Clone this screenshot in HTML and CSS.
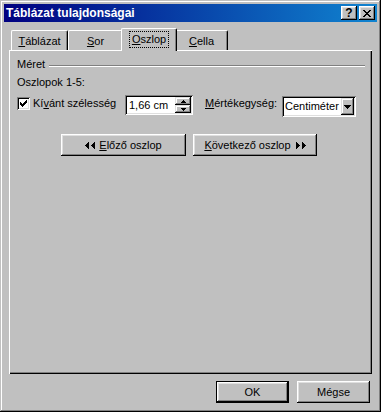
FILE: index.html
```html
<!DOCTYPE html>
<html>
<head>
<meta charset="utf-8">
<title>Táblázat tulajdonságai</title>
<link rel="stylesheet" href="styles.css">
</head>
<body>
<div class="window">
  <div class="titlebar">
    <span class="title">Táblázat tulajdonságai</span>
    <div class="tbtns">
      <span class="tbtn help">?</span>
      <span class="tbtn close"><svg width="8" height="7" viewBox="0 0 8 7"><path d="M0 0h2v1H0zM6 0h2v1H6zM1 1h2v1H1zM5 1h2v1H5zM2 2h4v1H2zM3 3h2v1H3zM2 4h4v1H2zM1 5h2v1H1zM5 5h2v1H5zM0 6h2v1H0zM6 6h2v1H6z"/></svg></span>
    </div>
  </div>
  <div class="client">
    <div class="tabs">
      <div class="tab t1"><u>T</u>áblázat</div>
      <div class="tab t2"><u>S</u>or</div>
      <div class="tab t3 sel"><span class="focus"><u>O</u>szlop</span></div>
      <div class="tab t4"><u>C</u>ella</div>
    </div>
    <div class="panel">
      <div class="group"><span>Méret</span><div class="sep"></div></div>
      <div class="sub">Oszlopok 1-5:</div>
      <div class="row">
        <div class="check">
          <span class="box"><svg width="13" height="13" viewBox="0 0 13 13"><path d="M3 5h1v3H3zM4 6h1v3H4zM5 7h1v3H5zM6 6h1v3H6zM7 5h1v3H7zM8 4h1v3H8zM9 3h1v3H9z"/></svg></span>
          <span>Kí<u>v</u>ánt szélesség</span>
        </div>
        <div class="spin field">
          <span class="val">1,66 cm</span>
          <div class="arrows">
            <span class="sbtn"><svg width="5" height="3" viewBox="0 0 5 3"><path d="M2 0h1v1H2zM1 1h3v1H1zM0 2h5v1H0z"/></svg></span>
            <span class="sbtn"><svg width="5" height="3" viewBox="0 0 5 3"><path d="M0 0h5v1H0zM1 1h3v1H1zM2 2h1v1H2z"/></svg></span>
          </div>
        </div>
        <span class="lbl"><u>M</u>értékegység:</span>
        <div class="combo field">
          <span class="val">Centiméter</span>
          <span class="dbtn"><svg width="7" height="4" viewBox="0 0 7 4"><path d="M0 0h7v1H0zM1 1h5v1H1zM2 2h3v1H2zM3 3h1v1H3z"/></svg></span>
        </div>
      </div>
      <div class="nav">
        <div class="btn prev"><svg width="10" height="7" viewBox="0 0 10 7"><path d="M3 0h1v1H3zM2 1h2v1H2zM1 2h3v1H1zM0 3h4v1H0zM1 4h3v1H1zM2 5h2v1H2zM3 6h1v1H3zM9 0h1v1H9zM8 1h2v1H8zM7 2h3v1H7zM6 3h4v1H6zM7 4h3v1H7zM8 5h2v1H8zM9 6h1v1H9z"/></svg><span><u>E</u>lőző oszlop</span></div>
        <div class="btn next"><span><u>K</u>övetkező oszlop</span><svg width="10" height="7" viewBox="0 0 10 7"><path d="M0 0h1v1H0zM0 1h2v1H0zM0 2h3v1H0zM0 3h4v1H0zM0 4h3v1H0zM0 5h2v1H0zM0 6h1v1H0zM6 0h1v1H6zM6 1h2v1H6zM6 2h3v1H6zM6 3h4v1H6zM6 4h3v1H6zM6 5h2v1H6zM6 6h1v1H6z"/></svg></div>
      </div>
    </div>
    <div class="footer">
      <div class="btn fbtn default">OK</div>
      <div class="btn fbtn">Mégse</div>
    </div>
  </div>
</div>
</body>
</html>
```

FILE: styles.css
```css
html, body {
  margin: 0;
  padding: 0;
  background: #c0c0c0;
}
body {
  font-family: "Liberation Sans", Arial, sans-serif;
  font-size: 11px;
  color: #000;
}
u { text-decoration: underline; text-underline-offset: 1px; }
svg { display: block; shape-rendering: crispEdges; fill: #000; }

.window {
  width: 381px;
  height: 412px;
  box-sizing: border-box;
  padding: 4px;
  background: #c0c0c0;
  box-shadow: inset -1px -1px #000, inset 1px 1px #c0c0c0, inset -2px -2px #808080, inset 2px 2px #fff;
  display: flex;
  flex-direction: column;
}

.titlebar {
  height: 18px;
  flex: none;
  background: linear-gradient(to right, #000080, #1084d0);
  display: flex;
  align-items: center;
  justify-content: space-between;
  padding: 0 2px;
}
.title {
  color: #fff;
  font-weight: bold;
  font-size: 12px;
  line-height: 14px;
}
.tbtns { display: flex; gap: 2px; }
.tbtn {
  width: 16px;
  height: 14px;
  box-sizing: border-box;
  background: #c0c0c0;
  box-shadow: inset -1px -1px #000, inset 1px 1px #fff, inset -2px -2px #808080, inset 2px 2px #dfdfdf;
  display: flex;
  align-items: center;
  justify-content: center;
}
.help { font-weight: bold; font-size: 12px; line-height: 12px; padding-bottom: 1px; }

.client {
  flex: 1;
  padding: 6px 5px 5px;
  display: flex;
  flex-direction: column;
}

.tabs {
  display: flex;
  align-items: flex-end;
  height: 22px;
  padding-left: 2px;
  flex: none;
}
.tab {
  height: 20px;
  box-sizing: border-box;
  background: #c0c0c0;
  border-top: 1px solid #fff;
  border-left: 1px solid #fff;
  border-right: 1px solid #000;
  border-radius: 2px 2px 0 0;
  box-shadow: inset -1px 0 #808080;
  text-align: center;
  line-height: 13px;
  padding-top: 4px;
}
.t1 { width: 57px; }
.t2 { width: 55px; }
.t3 { width: 56px; }
.t4 { width: 53px; }
.tab.sel {
  height: 23px;
  margin: 0 -2px -1px;
  padding-top: 2px;
  z-index: 1;
}
.focus {
  display: inline-block;
  border: 1px dotted #000;
  padding: 1px 2px;
  line-height: 13px;
}

.panel {
  height: 324px;
  flex: none;
  box-sizing: border-box;
  padding: 8px 7px 0 8px;
  box-shadow: inset 1px 1px #fff, inset -1px -1px #000, inset -2px -2px #808080;
}
.group {
  display: flex;
  height: 13px;
  line-height: 13px;
}
.sep {
  flex: 1;
  margin: 7px 0 0 4px;
  height: 0;
  border-top: 1px solid #808080;
  border-bottom: 1px solid #fff;
}
.sub {
  margin-top: 5px;
  line-height: 13px;
}

.row {
  margin-top: 6px;
  height: 22px;
  display: flex;
  align-items: flex-start;
}
.check {
  width: 108px;
  margin-top: 2px;
  display: flex;
  line-height: 13px;
}
.box {
  width: 13px;
  height: 13px;
  margin-right: 3px;
  background: #fff;
  box-shadow: inset 1px 1px #808080, inset -1px -1px #fff, inset 2px 2px #000, inset -2px -2px #dfdfdf;
}
.field {
  background: #fff;
  box-sizing: border-box;
  box-shadow: inset 1px 1px #808080, inset -1px -1px #fff, inset 2px 2px #000, inset -2px -2px #dfdfdf;
  display: flex;
}
.spin {
  width: 68px;
  height: 20px;
}
.val { flex: 1; white-space: nowrap; }
.spin .val {
  padding-left: 4px;
  line-height: 20px;
}
.arrows {
  width: 16px;
  margin: 2px 2px 2px 0;
  display: flex;
  flex-direction: column;
}
.sbtn {
  height: 8px;
  background: #c0c0c0;
  box-shadow: inset -1px -1px #000, inset 1px 1px #dfdfdf, inset -2px -2px #808080, inset 2px 2px #fff;
  display: flex;
  align-items: center;
  justify-content: center;
}
.lbl {
  width: 77px;
  margin: 2px 0 0 12px;
  line-height: 13px;
  white-space: nowrap;
}
.combo {
  width: 74px;
  height: 21px;
  margin-top: 1px;
}
.combo .val {
  padding-left: 3px;
  line-height: 21px;
}
.dbtn {
  width: 16px;
  margin: 2px;
  background: #c0c0c0;
  box-shadow: inset -1px -1px #000, inset 1px 1px #dfdfdf, inset -2px -2px #808080, inset 2px 2px #fff;
  display: flex;
  align-items: center;
  justify-content: center;
}

.nav {
  margin: 17px 0 0 44px;
  display: flex;
  gap: 7px;
}
.btn {
  height: 22px;
  box-sizing: border-box;
  background: #c0c0c0;
  box-shadow: inset -1px -1px #000, inset 1px 1px #fff, inset -2px -2px #808080, inset 2px 2px #dfdfdf;
  display: flex;
  align-items: center;
  justify-content: center;
  line-height: 13px;
  white-space: nowrap;
}
.prev { width: 125px; gap: 4px; }
.next { width: 124px; gap: 5px; }

.footer {
  margin-top: 7px;
  padding-right: 2px;
  display: flex;
  justify-content: flex-end;
  gap: 8px;
}
.fbtn { width: 73px; }
.default {
  box-shadow: inset 0 0 0 1px #000, inset -2px -2px #000, inset 2px 2px #fff, inset -3px -3px #808080, inset 3px 3px #dfdfdf;
}
```
